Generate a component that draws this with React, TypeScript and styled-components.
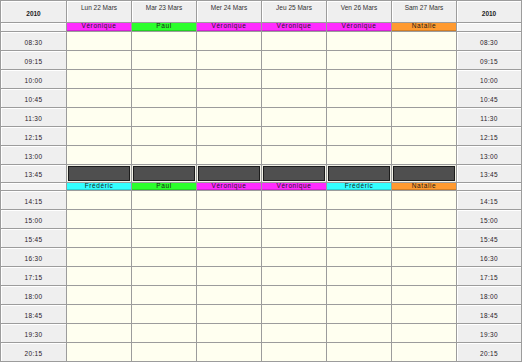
import React from 'react'
import styled, { createGlobalStyle } from 'styled-components'

const Global = createGlobalStyle`
  html, body { margin: 0; padding: 0; background: #fff; }
  body { font-family: "Liberation Sans", Arial, sans-serif; }
`

const Planning = styled.div`
  display: grid;
  grid-template-columns: 65px repeat(6, 64px) 64px;
  grid-template-rows: 21px 8px repeat(7, 18px) 17px 7px repeat(9, 18px);
  gap: 1px;
  padding: 1px;
  width: 522px;
  height: 362px;
  box-sizing: border-box;
  background: #9c9c9c;
  font-size: 6.5px;
  color: #222;
`

const Year = styled.div`
  display: flex;
  align-items: center;
  justify-content: center;
  padding-top: 3px;
  background: #efefef;
  font-weight: bold;
  box-shadow: inset 1px 1px 0 #fff;
`

const DayHead = styled.div`
  display: flex;
  justify-content: center;
  padding-top: 3px;
  background: #efefef;
  color: #333;
  box-shadow: inset 1px 1px 0 #fff;
`

const Blank = styled.div`
  background: #f4f4f4;
  box-shadow: inset 1px 1px 0 #fff;
`

const Person = styled.div<{ $tone: string }>`
  display: flex;
  align-items: center;
  justify-content: center;
  background: ${p => p.$tone};
  border-bottom: 1px solid rgba(0, 0, 0, 0.18);
  letter-spacing: 0.6px;
  color: #1a1a1a;
  line-height: 1;
`

const Time = styled.div`
  display: flex;
  align-items: center;
  justify-content: center;
  padding-top: 2px;
  box-sizing: border-box;
  background: #efefef;
  color: #2a1a2a;
  letter-spacing: 0.3px;
  box-shadow: inset 1px 1px 0 #fff;
`

const Slot = styled.div`
  background: #fffff0;
`

const Pause = styled.div`
  display: flex;
  padding: 1px;
  background: #f3f3e8;
`

const PauseBlock = styled.div`
  flex: 1;
  background: #4f4f4f;
  border: 1px solid #1c1c1c;
`

const TONES: Record<string, string> = {
  'Véronique': '#ff2cff',
  'Paul': '#2cff2c',
  'Natalie': '#ff9a30',
  'Frédéric': '#33ffff',
}

const days = ['Lun 22 Mars', 'Mar 23 Mars', 'Mer 24 Mars', 'Jeu 25 Mars', 'Ven 26 Mars', 'Sam 27 Mars']
const morning = ['Véronique', 'Paul', 'Véronique', 'Véronique', 'Véronique', 'Natalie']
const afternoon = ['Frédéric', 'Paul', 'Véronique', 'Véronique', 'Frédéric', 'Natalie']
const amTimes = ['08:30', '09:15', '10:00', '10:45', '11:30', '12:15', '13:00']
const pmTimes = ['14:15', '15:00', '15:45', '16:30', '17:15', '18:00', '18:45', '19:30', '20:15']

const NameRow = ({ names, tag }: { names: string[]; tag: string }) => (
  <>
    <Blank />
    {names.map((n, i) => (
      <Person key={tag + i} $tone={TONES[n]}>{n}</Person>
    ))}
    <Blank />
  </>
)

const TimeRow = ({ t }: { t: string }) => (
  <>
    <Time>{t}</Time>
    {days.map(d => <Slot key={t + d} />)}
    <Time>{t}</Time>
  </>
)

export default function App() {
  return (
    <>
      <Global />
      <Planning>
        <Year>2010</Year>
        {days.map(d => <DayHead key={d}>{d}</DayHead>)}
        <Year>2010</Year>

        <NameRow names={morning} tag="am" />
        {amTimes.map(t => <TimeRow key={t} t={t} />)}

        <Time>13:45</Time>
        {days.map(d => (
          <Pause key={'p' + d}><PauseBlock /></Pause>
        ))}
        <Time>13:45</Time>

        <NameRow names={afternoon} tag="pm" />
        {pmTimes.map(t => <TimeRow key={t} t={t} />)}
      </Planning>
    </>
  )
}
